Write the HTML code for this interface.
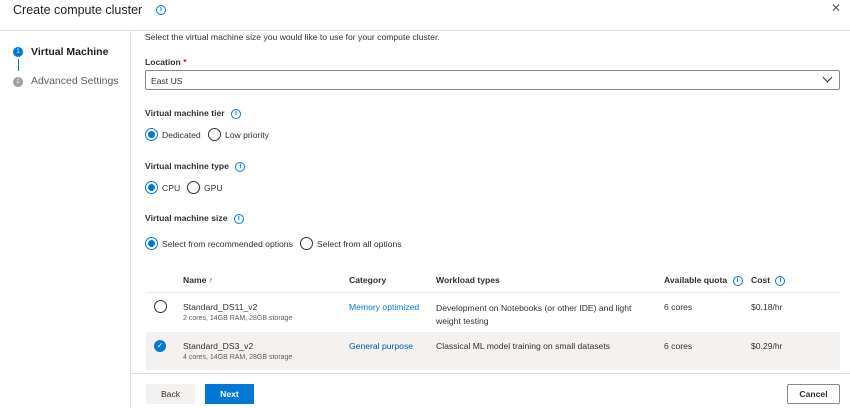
<!DOCTYPE html>
<html><head><style>
*{box-sizing:border-box;margin:0;padding:0}
body{width:850px;height:408px;background:#fff;font-family:"Liberation Sans",sans-serif;color:#323130;position:relative;overflow:hidden;font-size:8.6px}
.a{position:absolute;white-space:nowrap}
.b{font-weight:bold}
.info{display:inline-block;width:10px;height:10px;border:1px solid #0078d4;border-radius:50%;color:#0078d4;font-size:7px;line-height:8px;text-align:center;font-weight:bold;vertical-align:middle}
.r{position:absolute;width:13px;height:13px;border:1px solid #323130;border-radius:50%}
.r.on{border-color:#0078d4}
.r.on::after{content:"";position:absolute;left:2px;top:2px;width:7px;height:7px;border-radius:50%;background:#0078d4}
.link{color:#0078d4}
.g{color:#605e5c}
</style></head><body>
<div class="a" style="left:13px;top:3px;font-size:12.5px;color:#201f1e">Create compute cluster</div>
<div class="a" style="left:156px;top:4px"><span class="info">i</span></div>
<div class="a" style="left:831px;top:1px;font-size:12px;color:#605e5c">✕</div>
<div class="a" style="left:0;top:30px;width:850px;height:1px;background:#e1dfdd"></div>
<div class="a" style="left:130px;top:30px;width:1px;height:378px;background:#e1dfdd"></div>
<div class="a" style="left:13px;top:47px;width:10px;height:10px;border-radius:50%;background:#0078d4;color:#fff;font-size:6px;text-align:center;line-height:10px">1</div>
<div class="a" style="left:17.5px;top:59px;width:1.5px;height:12px;background:#0078d4"></div>
<div class="a" style="left:13px;top:77px;width:10px;height:10px;border-radius:50%;background:#a19f9d;color:#fff;font-size:6px;text-align:center;line-height:10px">2</div>
<div class="a b" style="left:31px;top:46px;font-size:10.5px;color:#201f1e">Virtual Machine</div>
<div class="a" style="left:31px;top:75px;font-size:10.5px;color:#605e5c">Advanced Settings</div>

<div class="a" style="left:145px;top:32px">Select the virtual machine size you would like to use for your compute cluster.</div>
<div class="a b" style="left:145px;top:57px">Location <span style="color:#a4262c">*</span></div>
<div class="a" style="left:145px;top:70px;width:695px;height:20px;border:1px solid #8a8886;border-radius:2px;padding:5px 5px">East US</div>
<div class="a" style="left:824px;top:74px;width:7px;height:7px;border-right:1.2px solid #323130;border-bottom:1.2px solid #323130;transform:rotate(45deg)"></div>

<div class="a b" style="left:145px;top:108px">Virtual machine tier <span class="info" style="margin-left:4px">i</span></div>
<div class="r on" style="left:145px;top:128px"></div><div class="a" style="left:162px;top:130px">Dedicated</div>
<div class="r" style="left:208px;top:128px"></div><div class="a" style="left:225px;top:130px">Low priority</div>

<div class="a b" style="left:145px;top:161px">Virtual machine type <span class="info" style="margin-left:4px">i</span></div>
<div class="r on" style="left:145px;top:181px"></div><div class="a" style="left:162px;top:183px">CPU</div>
<div class="r" style="left:187px;top:181px"></div><div class="a" style="left:204px;top:183px">GPU</div>

<div class="a b" style="left:145px;top:213px">Virtual machine size <span class="info" style="margin-left:4px">i</span></div>
<div class="r on" style="left:145px;top:237px"></div><div class="a" style="left:162px;top:239px">Select from recommended options</div>
<div class="r" style="left:300px;top:237px"></div><div class="a" style="left:317px;top:239px">Select from all options</div>

<div class="a b" style="left:183px;top:275px">Name ↑</div>
<div class="a b" style="left:349px;top:275px">Category</div>
<div class="a b" style="left:436px;top:275px">Workload types</div>
<div class="a b" style="left:664px;top:275px">Available quota <span class="info" style="margin-left:3px">i</span></div>
<div class="a b" style="left:751px;top:275px">Cost <span class="info" style="margin-left:3px">i</span></div>
<div class="a" style="left:146px;top:292px;width:694px;height:1px;background:#edebe9"></div>

<div class="r" style="left:154px;top:300px;border-color:#323130"></div>
<div class="a" style="left:183px;top:302px">Standard_DS11_v2</div>
<div class="a g" style="left:183px;top:315px;font-size:7px">2 cores, 14GB RAM, 28GB storage</div>
<div class="a link" style="left:349px;top:302px">Memory optimized</div>
<div class="a" style="left:436px;top:302px;line-height:13px">Development on Notebooks (or other IDE) and light<br>weight testing</div>
<div class="a" style="left:664px;top:302px">6 cores</div>
<div class="a" style="left:751px;top:302px">$0.18/hr</div>

<div class="a" style="left:146px;top:332px;width:694px;height:38px;background:#f3f2f1"></div>
<div class="a" style="left:154px;top:340px;width:12px;height:12px;border-radius:50%;background:#0078d4;color:#fff;font-size:8px;text-align:center;line-height:12px">✓</div>
<div class="a" style="left:183px;top:341px">Standard_DS3_v2</div>
<div class="a g" style="left:183px;top:354px;font-size:7px">4 cores, 14GB RAM, 28GB storage</div>
<div class="a link" style="left:349px;top:341px;color:#005a9e">General purpose</div>
<div class="a" style="left:436px;top:341px">Classical ML model training on small datasets</div>
<div class="a" style="left:664px;top:341px">6 cores</div>
<div class="a" style="left:751px;top:341px">$0.29/hr</div>

<div class="a" style="left:131px;top:373px;width:719px;height:1px;background:#e1dfdd"></div>
<div class="a" style="left:146px;top:384px;width:49px;height:20px;background:#f3f2f1;text-align:center;line-height:20px">Back</div>
<div class="a b" style="left:205px;top:384px;width:49px;height:20px;background:#0078d4;color:#fff;text-align:center;line-height:20px">Next</div>
<div class="a b" style="left:787px;top:384px;width:53px;height:20px;border:1px solid #8a8886;border-radius:2px;text-align:center;line-height:18px">Cancel</div>
</body></html>
